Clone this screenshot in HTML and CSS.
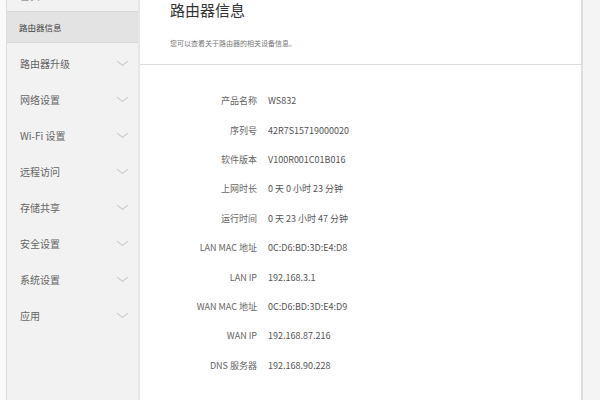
FILE: index.html
```html
<!DOCTYPE html>
<html lang="zh-CN">
<head>
    <meta charset="UTF-8">
    <title>路由器信息</title>
    <link rel="stylesheet" href="styles.css">
</head>
<body>
    <div class="page">
        <div class="gutter-left"></div>
        <nav class="sidebar">
            <div class="nav-item nav-top">首页</div>
            <div class="nav-item active">路由器信息</div>
            <div class="nav-item">路由器升级<span class="chev"></span></div>
            <div class="nav-item">网络设置<span class="chev"></span></div>
            <div class="nav-item">Wi-Fi 设置<span class="chev"></span></div>
            <div class="nav-item">远程访问<span class="chev"></span></div>
            <div class="nav-item">存储共享<span class="chev"></span></div>
            <div class="nav-item">安全设置<span class="chev"></span></div>
            <div class="nav-item">系统设置<span class="chev"></span></div>
            <div class="nav-item">应用<span class="chev"></span></div>
        </nav>
        <main class="content">
            <div class="content-head">
                <h1>路由器信息</h1>
                <p>您可以查看关于路由器的相关设备信息。</p>
            </div>
            <div class="info">
                <div class="row"><span class="label">产品名称</span><span class="value">WS832</span></div>
                <div class="row"><span class="label">序列号</span><span class="value">42R7S15719000020</span></div>
                <div class="row"><span class="label">软件版本</span><span class="value">V100R001C01B016</span></div>
                <div class="row"><span class="label">上网时长</span><span class="value">0 天 0 小时 23 分钟</span></div>
                <div class="row"><span class="label">运行时间</span><span class="value">0 天 23 小时 47 分钟</span></div>
                <div class="row"><span class="label">LAN MAC 地址</span><span class="value">0C:D6:BD:3D:E4:D8</span></div>
                <div class="row"><span class="label">LAN IP</span><span class="value">192.168.3.1</span></div>
                <div class="row"><span class="label">WAN MAC 地址</span><span class="value">0C:D6:BD:3D:E4:D9</span></div>
                <div class="row"><span class="label">WAN IP</span><span class="value">192.168.87.216</span></div>
                <div class="row"><span class="label">DNS 服务器</span><span class="value">192.168.90.228</span></div>
            </div>
        </main>
        <div class="gutter-right"></div>
    </div>
</body>
</html>
```

FILE: styles.css
```css
html, body {
    margin: 0;
    padding: 0;
    height: 100%;
    overflow: hidden;
}

body {
    font-family: "Noto Sans CJK SC", "Open Sans", sans-serif;
    color: #555;
    background: #f4f4f4;
}

.page {
    display: flex;
    height: 400px;
}

.gutter-left {
    width: 6px;
    background: #f9f9f9;
}

.sidebar {
    width: 131px;
    background: #f2f2f2;
    border-left: 1px solid #dcdcdc;
    border-right: 2px solid #e6e6e6;
    overflow: hidden;
}

.nav-item {
    height: 36px;
    display: flex;
    align-items: center;
    justify-content: space-between;
    padding: 0 10px 0 13px;
    font-size: 10px;
    color: #666;
}

.nav-top {
    margin-top: -21px;
    height: 32px;
    color: #999;
}

.nav-item.active {
    height: 30px;
    padding-left: 12px;
    margin-bottom: 2px;
    font-size: 8.5px;
    color: #444;
    background: #e3e3e3;
    border-top: 1px solid #d8d8d8;
    border-bottom: 1px solid #d8d8d8;
}

.chev {
    width: 6px;
    height: 6px;
    margin-right: 2px;
    margin-top: -4px;
    border-right: 1px solid #ccc;
    border-bottom: 1px solid #ccc;
    transform: scale(1.2, 0.9) rotate(45deg);
}

.content {
    width: 441px;
    background: #fff;
    border-right: 2px solid #dedede;
}

.content-head {
    height: 65px;
    padding-left: 30px;
    border-bottom: 1px solid #dcdcdc;
    box-sizing: border-box;
}

.content-head h1 {
    margin: 0;
    font-size: 15px;
    font-weight: normal;
    line-height: 20px;
    color: #333;
}

.content-head p {
    margin: 14px 0 0;
    font-size: 7px;
    line-height: 18px;
    color: #777;
}

.info {
    padding-top: 21px;
}

.row {
    display: flex;
    align-items: center;
    height: 29.4px;
    font-size: 9px;
}

.label {
    width: 117px;
    text-align: right;
    color: #666;
}

.value {
    margin-left: 11px;
    color: #555;
}

.gutter-right {
    flex: 1;
    background: #f4f4f4;
}
```
